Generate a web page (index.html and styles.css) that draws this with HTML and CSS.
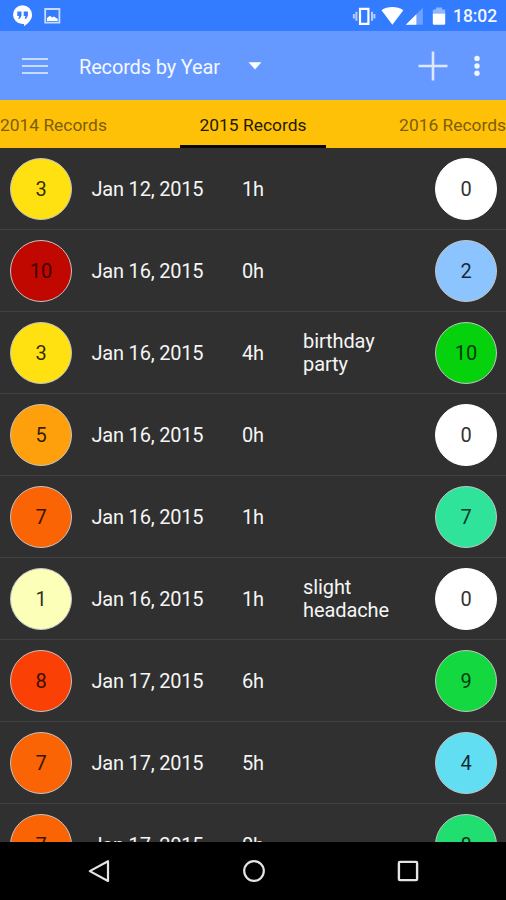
FILE: index.html
```html
<!DOCTYPE html>
<html lang="en">
<head>
<meta charset="utf-8">
<title>Records by Year</title>
<link rel="stylesheet" href="styles.css">
</head>
<body>
<div class="screen">
  <div class="status">
    <svg class="status-left" width="70" height="31" viewBox="0 0 70 31">
      <path fill="#fff" d="M22.5 5.2a9.6 9.6 0 0 1 9.6 9.6c0 5-4 8.6-8 11.4v-2.1h-1.6a9.45 9.45 0 0 1 0-18.9z"/>
      <path fill="#337bff" d="M17.3 11.5h4.2v4.2l-1.7 3h-1.6l1-2.7h-1.9zM23.7 11.5h4.2v4.2l-1.7 3h-1.6l1-2.7h-1.9z"/>
      <path fill="none" stroke="#c7dbff" stroke-width="1.8" d="M45.2 9h14.2v13.7H45.2z"/>
      <path fill="#fff" d="M47 21v-3l3-2.2 2.2 1.7 1.7-1.1 3.8 2.6v2z"/>
    </svg>
    <div class="status-right">
      <svg width="100" height="31" viewBox="0 0 100 31">
        <path fill="none" stroke="#fff" stroke-width="2.2" d="M8 8.8h8.4v15H8z"/>
        <path fill="none" stroke="#b5d0ff" stroke-width="2" d="M4.4 11.8v9M20 11.8v9M1.9 14v4.4M22.4 14v4.4"/>
        <path fill="#fff" d="M29.5 10.3C35 6 45.500 6 51.300 10.3L40.4 24.8z"/>
        <path fill="#6fa2ff" d="M70.8 7.7V24.8H53.8z"/>
        <path fill="#fff" d="M64.4 14.3V24.8H53.8z"/>
        <path fill="#8fb6ff" d="M80.800 13.6v-3q0-1.2 1.2-1.2h2V7.6h6v1.8h2q1.2 0 1.2 1.2v3z"/>
        <path fill="#fff" d="M80.800 13.6h12.4v10q0 1.2-1.2 1.2h-10q-1.2 0-1.2-1.2z"/>
      </svg>
      <span class="clock">18:02</span>
    </div>
  </div>
  <header class="appbar">
    <svg class="menu" width="26" height="16" viewBox="0 0 26 16"><path fill="none" stroke="#c9daff" stroke-width="2" d="M0 1h26M0 8h26M0 15h26"/></svg>
    <h1 class="title">Records by Year</h1>
    <svg class="caret" width="14" height="8" viewBox="0 0 14 8"><path fill="#fff" d="M.6.3h12.8L7 7.4z"/></svg>
    <svg class="plus" width="30" height="30" viewBox="0 0 30 30"><path fill="none" stroke="#dde8ff" stroke-width="2.6" d="M.5 15h29M15 .5v29"/></svg>
    <svg class="more" width="6" height="22" viewBox="0 0 6 22"><g fill="#f0f5ff"><circle cx="3" cy="3.4" r="2.7"/><circle cx="3" cy="11" r="2.7"/><circle cx="3" cy="18.3" r="2.7"/></g></svg>
  </header>
  <nav class="tabs">
    <span class="tab">2014 Records</span>
    <span class="tab active">2015 Records</span>
    <span class="tab">2016 Records</span>
  </nav>
  <main class="list">
    <div class="row"><span class="dot yellow">3</span><span class="date">Jan 12, 2015</span><span class="hours">1h</span><span class="note"></span><span class="dot white">0</span></div>
    <div class="row"><span class="dot red">10</span><span class="date">Jan 16, 2015</span><span class="hours">0h</span><span class="note"></span><span class="dot blue">2</span></div>
    <div class="row"><span class="dot yellow">3</span><span class="date">Jan 16, 2015</span><span class="hours">4h</span><span class="note">birthday party</span><span class="dot green10">10</span></div>
    <div class="row"><span class="dot amber">5</span><span class="date">Jan 16, 2015</span><span class="hours">0h</span><span class="note"></span><span class="dot white">0</span></div>
    <div class="row"><span class="dot orange">7</span><span class="date">Jan 16, 2015</span><span class="hours">1h</span><span class="note"></span><span class="dot green7">7</span></div>
    <div class="row"><span class="dot cream">1</span><span class="date">Jan 16, 2015</span><span class="hours">1h</span><span class="note">slight headache</span><span class="dot white">0</span></div>
    <div class="row"><span class="dot vermilion">8</span><span class="date">Jan 17, 2015</span><span class="hours">6h</span><span class="note"></span><span class="dot green9">9</span></div>
    <div class="row"><span class="dot orange">7</span><span class="date">Jan 17, 2015</span><span class="hours">5h</span><span class="note"></span><span class="dot cyan">4</span></div>
    <div class="row"><span class="dot orange">7</span><span class="date">Jan 17, 2015</span><span class="hours">0h</span><span class="note"></span><span class="dot green8">8</span></div>
  </main>
  <footer class="navbar">
    <svg width="24" height="24" viewBox="0 0 24 24"><path fill="none" stroke="#e4e4e4" stroke-width="2.2" stroke-linejoin="round" d="M21 2.2v19.8L2.8 12.1z"/></svg>
    <svg width="24" height="24" viewBox="0 0 24 24"><circle cx="12" cy="12" r="9.8" fill="none" stroke="#e4e4e4" stroke-width="2.2"/></svg>
    <svg width="24" height="24" viewBox="0 0 24 24"><rect x="2.9" y="2.9" width="18.2" height="18.2" rx="1" fill="none" stroke="#e4e4e4" stroke-width="2.4"/></svg>
  </footer>
</div>
</body>
</html>
```
FILE: styles.css
```css
* { box-sizing: border-box; }
body { margin: 0; font-family: Roboto, sans-serif; background: #000; }
svg { display: block; flex: none; }
.screen { width: 506px; height: 900px; display: flex; flex-direction: column; overflow: hidden; }

.status { height: 31px; flex: none; background: #337bff; display: flex; justify-content: space-between; }
.status-right { display: flex; align-items: center; padding-right: 9px; }
.clock { width: 46px; margin-left: -1px; padding-top: 2px; color: #f2f6ff; font-size: 17.5px; font-weight: 500; line-height: 29px; text-align: right; white-space: nowrap; letter-spacing: -0.1px; }

.appbar { height: 69px; flex: none; background: #6699ff; display: flex; align-items: center; padding: 0 26px 0 22px; }
.menu { margin-top: 1px; }
.title { width: 169px; margin: 3px 0 0 31px; color: #f4f7ff; font-size: 20px; font-weight: 400; line-height: 28px; letter-spacing: -0.16px; white-space: nowrap; }
.plus { margin-left: auto; }
.more { margin-left: 26.5px; }

.tabs { height: 48px; flex: none; background: #ffc107; display: flex; justify-content: space-between; }
.tab { color: #7b5e07; font-size: 17.4px; line-height: 50px; white-space: nowrap; }
.active { color: #221a02; width: 146px; text-align: center; border-bottom: 3px solid #0b0800; }

.list { flex: 1; min-height: 0; overflow: hidden; background: #303030; }
.row { height: 82px; display: flex; align-items: center; padding: 0 9px 0 10px; border-bottom: 1px solid #414141; }
.dot { width: 62px; height: 62px; flex: none; border-radius: 50%; border: 1.5px solid #c4c4c4; display: flex; align-items: center; justify-content: center; color: rgba(0, 0, 0, .82); font-size: 20px; line-height: 24px; }
.date { width: 151px; margin-left: 19px; padding-left: .5px; letter-spacing: -0.2px; }
.hours { width: 61px; letter-spacing: -0.2px; }
.note { width: 110px; line-height: 23px; padding-top: 1px; letter-spacing: -0.1px; }
.date, .hours, .note { color: #f5f5f5; font-size: 20px; flex: none; }
.row .dot:last-child { margin-left: auto; }

.yellow { background: #ffe010; }
.red { background: #c00800; color: #3a0300; }
.amber { background: #fe9f0c; }
.orange { background: #fa6405; color: #381600; }
.cream { background: #fbffb8; }
.vermilion { background: #fa4005; color: #380e00; }
.white { background: #fff; border-color: #fff; color: #333; }
.blue { background: #8cc4ff; }
.green10 { background: #05d20c; color: #033c04; }
.green7 { background: #30e39b; color: #0a3a28; }
.green9 { background: #14d840; color: #053c12; }
.cyan { background: #62def2; }
.green8 { background: #20de70; }

.navbar { height: 58px; flex: none; background: #000; display: flex; justify-content: space-between; padding: 17px 86px 0 87px; }
```
